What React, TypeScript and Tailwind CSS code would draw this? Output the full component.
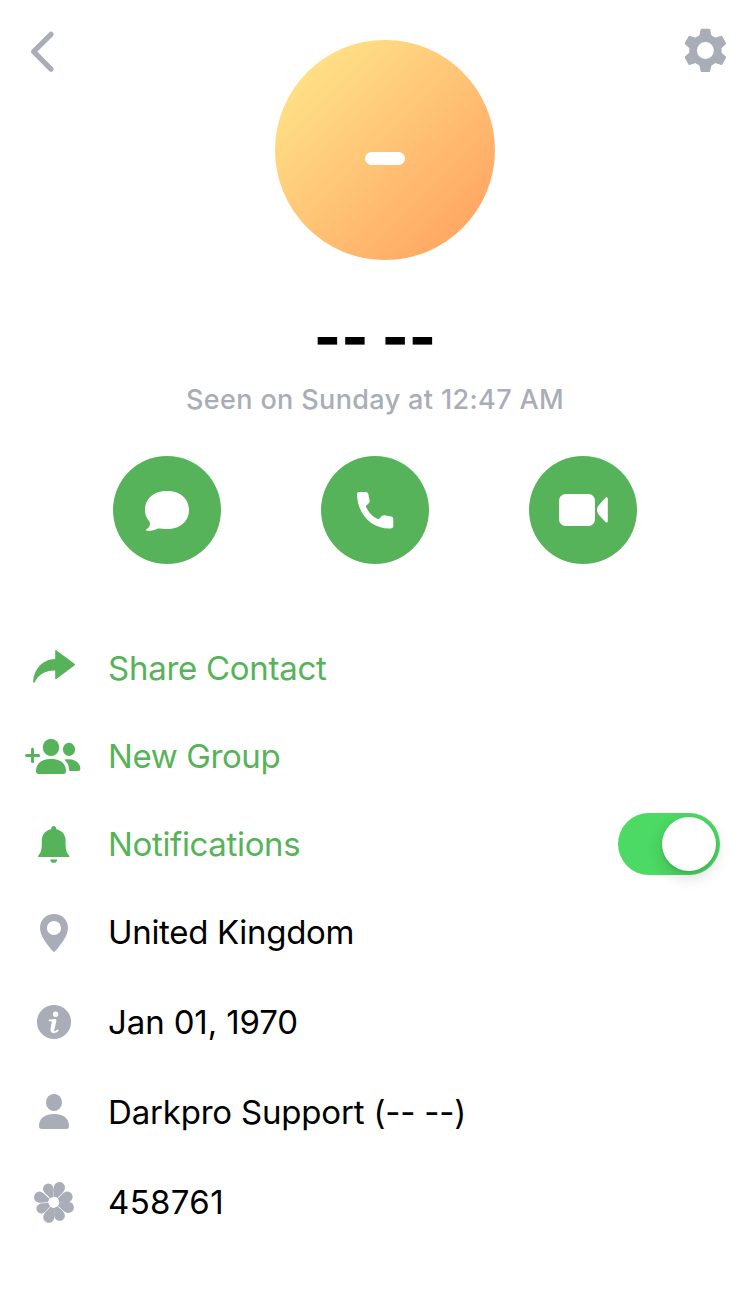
import React from 'react';

interface RowProps {
  icon: React.ReactNode;
  label: string;
  className?: string;
  labelClass?: string;
  children?: React.ReactNode;
}

const BackIcon = () => (
  <svg width="60" height="60" viewBox="0 0 60 60" fill="none" stroke="#a9adb7" strokeWidth="5.2" strokeLinecap="round" strokeLinejoin="round">
    <path d="M39 14.3 21.6 31.7 39 49.1" />
  </svg>
);

const GearIcon = () => (
  <svg width="50" height="50" viewBox="-25.4 -25.4 50 50" fill="#a9adb7">
    {[0, 60, 120, 180, 240, 300].map(angle => (
      <path key={angle} transform={`rotate(${angle})`} d="M-6.4-13-4.9-20.4Q-4.7-21.6-3.7-21.6H3.7Q4.7-21.6 4.9-20.4L6.4-13Z" />
    ))}
    <path fillRule="evenodd" d="M0-16.2a16.2 16.2 0 1 1 0 32.4a16.2 16.2 0 1 1 0-32.4ZM0-8.5a8.5 8.5 0 1 0 0 17a8.5 8.5 0 1 0 0-17Z" />
  </svg>
);

const ChatIcon = () => (
  <svg width="108" height="108" viewBox="0 0 108 108" fill="#fff">
    <path d="M54 35C67 35 76 42.5 76 54S67 73 54 73C50.5 73 47.5 72.5 45 72.5C41.5 74 37 75.3 33.8 74.8C32.7 74.6 32.8 73.6 33.7 73.1C37 71 37.8 68 36.2 65.3C33.5 62.2 32 58.5 32 54C32 42.5 41 35 54 35Z" />
  </svg>
);

const PhoneIcon = () => (
  <svg width="108" height="108" viewBox="0 0 108 108" fill="#fff">
    <path d="M38 36H45Q46.8 36 47.2 37.5C47.6 40 48.2 42 48.6 44.6C48.8 46.4 47.8 47.6 46.4 48.6C45 49.6 44.8 50.2 45.3 51.4C47.8 56.8 51.6 60.6 56.2 62.8C57.4 63.4 58.2 63 59 62C60.2 60.2 61.6 58.8 63.8 59.2C66 59.8 68 60.2 70.4 60.5Q72.3 60.8 72.3 62.5V70Q72.3 72.2 70 72.5C51.5 73.5 36.3 59 36 38Q36 36 38 36Z" />
  </svg>
);

const VideoIcon = () => (
  <svg width="108" height="108" viewBox="0 0 108 108" fill="#fff">
    <rect x="30" y="38" width="36" height="32" rx="6.5" />
    <path d="M68 54Q68 51.5 69.4 49.8L76.2 42Q77.3 41 78.2 41.5Q78.8 41.8 78.8 43V64.8Q78.8 66 78.2 66.4Q77.3 66.9 76.2 65.8L69.4 58.2Q68 56.5 68 54Z" />
  </svg>
);

const ShareIcon = () => (
  <svg width="60" height="60" viewBox="0 0 60 60" fill="#57b35a">
    <path d="M31.2 12.7Q31.3 11.6 32.3 12.2L50.8 26Q51.4 26.6 50.8 27.2L32.3 41Q31.3 41.6 31.2 40.6V32.4C21.5 32.2 14.5 36.5 10.6 44.2Q9.3 45.6 9.2 43.8C9.8 31.5 18.5 21.3 31.2 21.1Z" />
  </svg>
);

const GroupIcon = () => (
  <svg width="60" height="60" viewBox="0 0 60 60" fill="#57b35a">
    <path d="M8.5 23.2V35.6M2.6 29.4H14.6" stroke="#57b35a" strokeWidth="3" strokeLinecap="round" />
    <ellipse cx="27" cy="21.4" rx="8.2" ry="8.6" />
    <path d="M27 33C36 33 42 37 42 45Q42 48 39.5 48H14.5Q12 48 12 45C12 37 18 33 27 33Z" />
    <ellipse cx="45" cy="23.4" rx="6.1" ry="6.6" />
    <path d="M40.3 33.7C50 32 56.4 36.5 56.4 42.8Q56.4 45 54.2 45H45.2C45 39.5 43.5 36 40.3 33.7Z" />
  </svg>
);

const BellIcon = () => (
  <svg width="60" height="60" viewBox="0 0 60 60" fill="#57b35a">
    <path d="M29.7 12Q32 12 32.3 15.2C38 16.4 41.6 20.5 41.6 26.5C41.6 34 41.5 37.5 45.3 41.8Q46 43 44.8 43H14.8Q13.6 43 14.2 41.8C17.9 37.5 17.8 34 17.8 26.5C17.8 20.5 21.4 16.4 27.1 15.2Q27.4 12 29.7 12ZM26.2 45.4H33.2Q32.8 48.8 29.7 48.8T26.2 45.4Z" />
  </svg>
);

const PinIcon = () => (
  <svg width="60" height="60" viewBox="0 0 60 60" fill="#a9adb7">
    <path fillRule="evenodd" d="M30 12C38 12 44 18 44 25.8C44 34 37 42.5 31.2 49.3Q30 50.6 28.8 49.3C23 42.5 16 34 16 25.8C16 18 22 12 30 12ZM30 18.9a7.1 7.1 0 1 0 0 14.2a7.1 7.1 0 1 0 0-14.2Z" />
  </svg>
);

const InfoIcon = () => (
  <svg width="60" height="60" viewBox="0 0 60 60" fill="none" stroke="#fff">
    <circle cx="30" cy="30" r="17.1" fill="#a9adb7" stroke="none" />
    <circle cx="31.6" cy="22.2" r="2.7" fill="#fff" stroke="none" />
    <path d="M25.6 28.4Q28.5 28.6 31 27.9" strokeWidth="1.9" strokeLinecap="round" />
    <path d="M30.5 27.4 28.7 36.2Q28.1 39.2 30.2 39.2" strokeWidth="4.2" />
    <path d="M29.3 40.2Q32.2 40.4 33.8 38.4" strokeWidth="1.7" strokeLinecap="round" />
  </svg>
);

const PersonIcon = () => (
  <svg width="60" height="60" viewBox="0 0 60 60" fill="#a9adb7">
    <ellipse cx="30" cy="20.4" rx="8" ry="8.6" />
    <path d="M30 32C39 32 45 36 45 44Q45 47 42.5 47H17.5Q15 47 15 44C15 36 21 32 30 32Z" />
  </svg>
);

// angle and length of each petal, clockwise from the top left one
const petals = [
  [-22, 19.8], [21, 21.4], [68, 20], [109, 21],
  [156, 19.8], [198, 21.2], [243, 18.8], [290, 20.6],
];

const FlowerIcon = () => (
  <svg width="60" height="60" viewBox="-29.7 -30.3 60 60" fill="#a9adb7">
    {petals.map(([angle, length]) => (
      <path
        key={angle}
        transform={`rotate(${angle}) scale(${length / 20})`}
        d="M-1.9-5C-2.8-8.5-5.3-11.2-5.3-14.9A5.3 5.1 0 0 1 5.3-14.9C5.3-11.2 2.8-8.5 1.9-5Z"
      />
    ))}
    <circle r="5.4" fill="#fff" />
  </svg>
);

const ActionButton = ({ label, children }: { label: string, children: React.ReactNode }) => (
  <button aria-label={label} className="size-[108px] rounded-full bg-[#57b35a]">
    {children}
  </button>
);

const Row: React.FC<RowProps> = ({ icon, label, className = 'h-[90px] text-black', labelClass, children }) => (
  <div className={`flex items-center pl-6 pr-[30px] ${className}`}>
    <div className="shrink-0">{icon}</div>
    <span className={`ml-6 flex-1 whitespace-nowrap text-[33px] leading-10 ${labelClass}`}>{label}</span>
    {children}
  </div>
);

const App: React.FC = () => {
  return (
    <div className="h-[1295px] w-[750px] overflow-hidden bg-white font-['Inter',sans-serif]">
      <header className="flex h-[260px] items-start">
        <button aria-label="Back" className="ml-3 mt-5"><BackIcon /></button>
        <div className="ml-[203px] mt-10 flex size-[220px] items-center justify-center rounded-full bg-[linear-gradient(135deg,#ffe78b_5%,#ff9f5f_97%)]">
          <span className="mt-[17px] h-[13px] w-10 rounded-full bg-white text-center text-[13px] font-bold leading-[13px] text-white">-</span>
        </div>
        <button aria-label="Settings" className="ml-auto mr-5 mt-[25px]"><GearIcon /></button>
      </header>

      <div className="mt-[47px] flex flex-col items-center">
        <h1 className="h-[60px] text-[58px] font-extrabold leading-[60px] tracking-[0.1px] text-black">-- --</h1>
        <p className="mt-[13px] h-10 text-[27px] font-medium leading-10 tracking-[0.37px] text-[#a9adb7]">Seen on Sunday at 12:47 AM</p>
      </div>

      <div className="mt-9 flex justify-between px-[113px]">
        <ActionButton label="Message"><ChatIcon /></ActionButton>
        <ActionButton label="Call"><PhoneIcon /></ActionButton>
        <ActionButton label="Video call"><VideoIcon /></ActionButton>
      </div>

      <div className="mt-[60px]">
        <Row icon={<ShareIcon />} label="Share Contact" className="h-[88px] text-[#57b35a]" labelClass="tracking-[-0.27px]" />
        <Row icon={<GroupIcon />} label="New Group" className="h-[88px] text-[#57b35a]" labelClass="tracking-[-0.4px]" />
        <Row icon={<BellIcon />} label="Notifications" className="h-[88px] text-[#57b35a]" labelClass="tracking-[-0.35px]">
          <button role="switch" aria-checked="true" aria-label="Notifications" className="flex h-[62px] w-[102px] items-center justify-end rounded-full bg-[#4cd964] pr-1">
            <span className="size-[54px] rounded-full bg-white shadow-[0_6px_16px_rgba(0,0,0,0.16),0_2px_3px_rgba(0,0,0,0.08)]" />
          </button>
        </Row>
        <Row icon={<PinIcon />} label="United Kingdom" className="mb-px h-[88px] text-black" labelClass="tracking-[-0.32px]" />
        <Row icon={<InfoIcon />} label="Jan 01, 1970" labelClass="tracking-[-0.12px]" />
        <Row icon={<PersonIcon />} label="Darkpro Support (-- --)" labelClass="tracking-[-0.19px]" />
        <Row icon={<FlowerIcon />} label="458761" labelClass="tracking-[0.35px]" />
      </div>
    </div>
  );
};

export default App;
